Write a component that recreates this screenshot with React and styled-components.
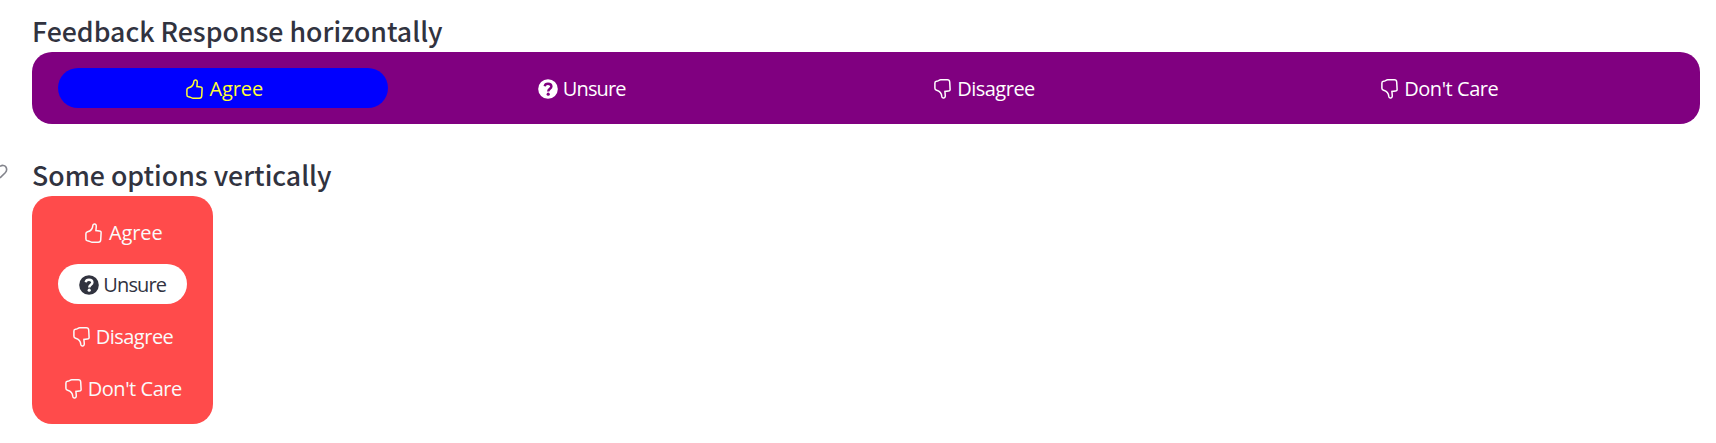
import React, { useId } from "react";
import styled, { createGlobalStyle, css } from "styled-components";

const GlobalStyle = createGlobalStyle`
  *, *::before, *::after { box-sizing: border-box; }
  body { margin: 0; background: #fff; color: #31333f; overflow: hidden; }
`;

const Page = styled.main`
  display: flex;
  flex-direction: column;
  padding: 12px 16px 0 32px;
`;

const Section = styled.section`
  display: flex;
  flex-direction: column;
  align-items: flex-start;
  position: relative;
  margin-bottom: 32px;
`;

const Heading = styled.h3`
  margin: 0;
  height: 40px;
  line-height: 38px;
  white-space: nowrap;
  font-family: "Noto Sans CJK SC", "Noto Sans", sans-serif;
  font-weight: 500;
  font-size: 26.7px;
`;

const AnchorMark = styled.svg`
  position: absolute;
  left: -32px;
  top: 8px;
  width: 8px;
  height: 18px;
`;

const Options = styled.div`
  display: grid;
  gap: 12px;
  padding: 16px 26px;
  border-radius: 20px;
  ${(p) =>
    p.$vertical
      ? css`
          width: 181px;
          background: #ff4b4b;
          color: #fafafa;
        `
      : css`
          width: 100%;
          grid-template-columns: 330fr 364fr 416fr 470fr;
          background: #800080;
          color: #fff;
        `}
`;

const Option = styled.button`
  display: flex;
  align-items: center;
  justify-content: center;
  gap: ${(p) => p.$gap}px;
  height: 40px;
  padding: 2px 0 0 ${(p) => p.$indent}px;
  border: 0;
  border-radius: 20px;
  background: ${(p) => p.$fill || "transparent"};
  color: ${(p) => p.$ink || "inherit"};
  font-family: "Open Sans", "Noto Sans", sans-serif;
  font-size: 20px;
  line-height: 38px;
  white-space: nowrap;
`;

const Icon = styled.svg`
  flex: none;
  width: ${(p) => p.$width}px;
  height: 20px;
`;

const Label = styled.span`
  letter-spacing: ${(p) => p.$tracking}px;
`;

const thumb =
  "M9.2 1C10.5.8 11.3 1.7 11.3 3.2L10.9 7.6L14.4 7.9C15.6 8 16.2 8.8 16.1 9.8L15.7 17C15.6 18.5 14.7 19.2 13.3 19.2H6.8C5 19.2 4.3 17.9 2.5 17.7C1.3 17.5.9 16.9.9 16V10.8C.9 9.6 1.5 9.1 2.6 8.8C5.6 8 7.6 5.6 7.8 2.6C7.9 1.6 8.3 1.1 9.2 1Z";

const Thumb = ({ down }) => (
  <Icon $width={17} viewBox="0 0 17 20" fill="none" stroke="currentColor" strokeWidth="1.5">
    <path d={thumb} transform={down ? "matrix(1 0 0 -1 0 20)" : undefined} />
  </Icon>
);

const Question = () => {
  const id = useId();
  return (
    <Icon $width={20} viewBox="0 0 20 20">
      <mask id={id}>
        <rect width="20" height="20" fill="#fff" />
        <path
          d="M6.7 7.2C7 5.5 8.2 4.8 10 4.8C12 4.8 13.4 5.9 13.4 7.5C13.4 9.8 10.2 9.8 10.2 12.4"
          fill="none"
          stroke="#000"
          strokeWidth="2.4"
        />
        <circle cx="10.2" cy="15.2" r="1.6" fill="#000" />
      </mask>
      <circle cx="10" cy="10" r="9.8" fill="currentColor" mask={`url(#${id})`} />
    </Icon>
  );
};

const items = [
  { label: "Agree", icon: <Thumb />, gap: 6.5, tracking: -0.1, indent: 3 },
  { label: "Unsure", icon: <Question />, gap: 4.5, tracking: -0.85, indent: 0 },
  { label: "Disagree", icon: <Thumb down />, gap: 6, tracking: -0.5, indent: 1 },
  { label: "Don't Care", icon: <Thumb down />, gap: 6, tracking: -0.45, indent: 1.5 },
];

function OptionGroup({ vertical, selected, fill, ink }) {
  return (
    <Options $vertical={vertical}>
      {items.map(({ label, icon, gap, tracking, indent }, i) => (
        <Option
          key={label}
          $gap={gap}
          $indent={indent}
          $fill={i === selected && fill}
          $ink={i === selected && ink}
        >
          {icon}
          <Label $tracking={tracking}>{label}</Label>
        </Option>
      ))}
    </Options>
  );
}

export default function App() {
  return (
    <>
      <GlobalStyle />
      <Page>
        <Section>
          <Heading>Feedback Response horizontally</Heading>
          <OptionGroup selected={0} fill="#00f" ink="#ffff33" />
        </Section>
        <Section>
          <AnchorMark viewBox="0 0 8 18" fill="none" stroke="#83848c" strokeWidth="1.6">
            <path d="M0 2.4C2 .9 4.700 1.100 5.900 3C7 4.800 6.600 7.200 5.200 8.800L0 14" />
          </AnchorMark>
          <Heading>Some options vertically</Heading>
          <OptionGroup vertical selected={1} fill="#fff" ink="#31333f" />
        </Section>
      </Page>
    </>
  );
}
